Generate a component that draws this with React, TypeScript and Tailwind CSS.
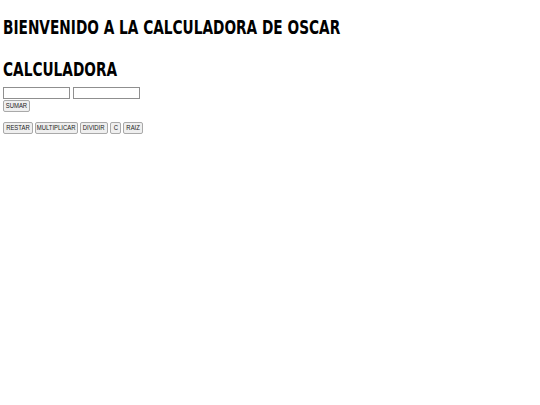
type BtnProps = { label: string; w: string };

function Btn({ label, w }: BtnProps) {
  return (
    <button
      className={`${w} h-[12px] flex items-center justify-center overflow-visible border border-[#a9a9a9] bg-[#efefef] rounded-[2px] text-[#222]`}
    >
      <span className="inline-block shrink-0 scale-x-[0.74] text-[8px] leading-none whitespace-nowrap [font-family:'Liberation_Sans',Arial,sans-serif]">
        {label}
      </span>
    </button>
  );
}

export default function App() {
  const head =
    "origin-left scale-x-[0.685] whitespace-nowrap text-[20px] font-bold text-black leading-none [font-family:'DejaVu_Sans',sans-serif]";
  return (
    <div className="w-[540px] h-[405px] bg-white px-[3px]">
      <h1 className={`${head} pt-[17px]`}>BIENVENIDO A LA CALCULADORA DE OSCAR</h1>
      <h2 className={`${head} mt-[22px]`}>CALCULADORA</h2>
      <div className="mt-[8px] flex gap-[3px]">
        <input className="w-[67px] h-[12px] border border-[#8f8f8f] bg-white" />
        <input className="w-[67px] h-[12px] border border-[#8f8f8f] bg-white" />
      </div>
      <div className="mt-[1px] flex">
        <Btn label="SUMAR" w="w-[27px]" />
      </div>
      <div className="mt-[10px] flex gap-[2px]">
        <Btn label="RESTAR" w="w-[30px]" />
        <Btn label="MULTIPLICAR" w="w-[43px]" />
        <Btn label="DIVIDIR" w="w-[28px]" />
        <Btn label="C" w="w-[11px]" />
        <Btn label="RAIZ" w="w-[20px]" />
      </div>
    </div>
  );
}
